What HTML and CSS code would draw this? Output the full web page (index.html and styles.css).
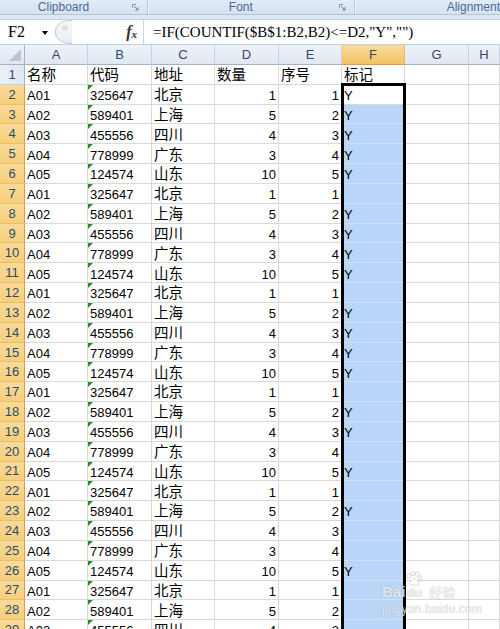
FILE: index.html
```html
<!DOCTYPE html>
<html>
<head>
<meta charset="utf-8">
<link rel="stylesheet" href="styles.css">
</head>
<body>
<div class="app">
  <div class="ribbon">
    <div class="group g1"><span class="glabel">Clipboard</span><svg class="launch" viewBox="0 0 7 7"><path d="M0.5 4V0.5H4" fill="none" stroke="#8496ac"/><path d="M2 2L6 6M6 3.2V6H3.2" fill="none" stroke="#6f849e"/></svg></div>
    <div class="group g2"><span class="glabel">Font</span><svg class="launch" viewBox="0 0 7 7"><path d="M0.5 4V0.5H4" fill="none" stroke="#8496ac"/><path d="M2 2L6 6M6 3.2V6H3.2" fill="none" stroke="#6f849e"/></svg></div>
    <div class="group g3"><span class="glabel3">Alignment</span></div>
  </div>
  <div class="band"></div>
  <div class="fbar">
    <div class="namebox"><span>F2</span><span class="arrow"></span></div>
    <svg class="split" width="18" height="24" viewBox="0 0 18 24"><defs><linearGradient id="sg" x1="0" y1="0" x2="0" y2="1"><stop offset="0" stop-color="#f6f8fb"/><stop offset="1" stop-color="#e9edf2"/></linearGradient></defs><path d="M18 0.5C6 0.5 1.5 6 1.5 12C1.5 18 6 23.5 18 23.5" fill="url(#sg)" stroke="#bfc8d3"/><circle cx="11" cy="8" r="3" fill="#dde2e8"/></svg>
    <div class="fxarea"><span class="fx"><span class="fxf">f</span><span class="fxx">x</span></span></div>
    <div class="formula">=IF(COUNTIF($B$1:B2,B2)&lt;=D2,"Y","")</div>
  </div>
  <div class="sheet">
    <div class="ch corner"><svg width="24" height="19" viewBox="0 0 24 19"><polygon points="21,4 21,16 9,16" fill="#b9c6d4"/></svg></div>
    <div class="ch">A</div><div class="ch">B</div><div class="ch">C</div><div class="ch">D</div><div class="ch">E</div><div class="ch on">F</div><div class="ch">G</div><div class="ch">H</div>

    <div class="rh">1</div><div class="c cj">名称</div><div class="c cj">代码</div><div class="c cj">地址</div><div class="c cj">数量</div><div class="c cj">序号</div><div class="c cj">标记</div><div class="c"></div><div class="c"></div>

    <div class="rh on">2</div><div class="c">A01</div><div class="c g">325647</div><div class="c cj">北京</div><div class="c n">1</div><div class="c n">1</div><div class="c act">Y</div><div class="c"></div><div class="c"></div>
    <div class="rh on">3</div><div class="c">A02</div><div class="c g">589401</div><div class="c cj">上海</div><div class="c n">5</div><div class="c n">2</div><div class="c sel">Y</div><div class="c"></div><div class="c"></div>
    <div class="rh on">4</div><div class="c">A03</div><div class="c g">455556</div><div class="c cj">四川</div><div class="c n">4</div><div class="c n">3</div><div class="c sel">Y</div><div class="c"></div><div class="c"></div>
    <div class="rh on">5</div><div class="c">A04</div><div class="c g">778999</div><div class="c cj">广东</div><div class="c n">3</div><div class="c n">4</div><div class="c sel">Y</div><div class="c"></div><div class="c"></div>
    <div class="rh on">6</div><div class="c">A05</div><div class="c g">124574</div><div class="c cj">山东</div><div class="c n">10</div><div class="c n">5</div><div class="c sel">Y</div><div class="c"></div><div class="c"></div>
    <div class="rh on">7</div><div class="c">A01</div><div class="c g">325647</div><div class="c cj">北京</div><div class="c n">1</div><div class="c n">1</div><div class="c sel"></div><div class="c"></div><div class="c"></div>
    <div class="rh on">8</div><div class="c">A02</div><div class="c g">589401</div><div class="c cj">上海</div><div class="c n">5</div><div class="c n">2</div><div class="c sel">Y</div><div class="c"></div><div class="c"></div>
    <div class="rh on">9</div><div class="c">A03</div><div class="c g">455556</div><div class="c cj">四川</div><div class="c n">4</div><div class="c n">3</div><div class="c sel">Y</div><div class="c"></div><div class="c"></div>
    <div class="rh on">10</div><div class="c">A04</div><div class="c g">778999</div><div class="c cj">广东</div><div class="c n">3</div><div class="c n">4</div><div class="c sel">Y</div><div class="c"></div><div class="c"></div>
    <div class="rh on">11</div><div class="c">A05</div><div class="c g">124574</div><div class="c cj">山东</div><div class="c n">10</div><div class="c n">5</div><div class="c sel">Y</div><div class="c"></div><div class="c"></div>
    <div class="rh on">12</div><div class="c">A01</div><div class="c g">325647</div><div class="c cj">北京</div><div class="c n">1</div><div class="c n">1</div><div class="c sel"></div><div class="c"></div><div class="c"></div>
    <div class="rh on">13</div><div class="c">A02</div><div class="c g">589401</div><div class="c cj">上海</div><div class="c n">5</div><div class="c n">2</div><div class="c sel">Y</div><div class="c"></div><div class="c"></div>
    <div class="rh on">14</div><div class="c">A03</div><div class="c g">455556</div><div class="c cj">四川</div><div class="c n">4</div><div class="c n">3</div><div class="c sel">Y</div><div class="c"></div><div class="c"></div>
    <div class="rh on">15</div><div class="c">A04</div><div class="c g">778999</div><div class="c cj">广东</div><div class="c n">3</div><div class="c n">4</div><div class="c sel">Y</div><div class="c"></div><div class="c"></div>
    <div class="rh on">16</div><div class="c">A05</div><div class="c g">124574</div><div class="c cj">山东</div><div class="c n">10</div><div class="c n">5</div><div class="c sel">Y</div><div class="c"></div><div class="c"></div>
    <div class="rh on">17</div><div class="c">A01</div><div class="c g">325647</div><div class="c cj">北京</div><div class="c n">1</div><div class="c n">1</div><div class="c sel"></div><div class="c"></div><div class="c"></div>
    <div class="rh on">18</div><div class="c">A02</div><div class="c g">589401</div><div class="c cj">上海</div><div class="c n">5</div><div class="c n">2</div><div class="c sel">Y</div><div class="c"></div><div class="c"></div>
    <div class="rh on">19</div><div class="c">A03</div><div class="c g">455556</div><div class="c cj">四川</div><div class="c n">4</div><div class="c n">3</div><div class="c sel">Y</div><div class="c"></div><div class="c"></div>
    <div class="rh on">20</div><div class="c">A04</div><div class="c g">778999</div><div class="c cj">广东</div><div class="c n">3</div><div class="c n">4</div><div class="c sel"></div><div class="c"></div><div class="c"></div>
    <div class="rh on">21</div><div class="c">A05</div><div class="c g">124574</div><div class="c cj">山东</div><div class="c n">10</div><div class="c n">5</div><div class="c sel">Y</div><div class="c"></div><div class="c"></div>
    <div class="rh on">22</div><div class="c">A01</div><div class="c g">325647</div><div class="c cj">北京</div><div class="c n">1</div><div class="c n">1</div><div class="c sel"></div><div class="c"></div><div class="c"></div>
    <div class="rh on">23</div><div class="c">A02</div><div class="c g">589401</div><div class="c cj">上海</div><div class="c n">5</div><div class="c n">2</div><div class="c sel">Y</div><div class="c"></div><div class="c"></div>
    <div class="rh on">24</div><div class="c">A03</div><div class="c g">455556</div><div class="c cj">四川</div><div class="c n">4</div><div class="c n">3</div><div class="c sel"></div><div class="c"></div><div class="c"></div>
    <div class="rh on">25</div><div class="c">A04</div><div class="c g">778999</div><div class="c cj">广东</div><div class="c n">3</div><div class="c n">4</div><div class="c sel"></div><div class="c"></div><div class="c"></div>
    <div class="rh on">26</div><div class="c">A05</div><div class="c g">124574</div><div class="c cj">山东</div><div class="c n">10</div><div class="c n">5</div><div class="c sel">Y</div><div class="c"></div><div class="c"></div>
    <div class="rh on">27</div><div class="c">A01</div><div class="c g">325647</div><div class="c cj">北京</div><div class="c n">1</div><div class="c n">1</div><div class="c sel"></div><div class="c"></div><div class="c"></div>
    <div class="rh on">28</div><div class="c">A02</div><div class="c g">589401</div><div class="c cj">上海</div><div class="c n">5</div><div class="c n">2</div><div class="c sel"></div><div class="c"></div><div class="c"></div>
    <div class="rh on">29</div><div class="c">A03</div><div class="c g">455556</div><div class="c cj">四川</div><div class="c n">4</div><div class="c n">3</div><div class="c sel"></div><div class="c"></div><div class="c"></div>

    <div class="frame"></div>
  </div>
  <div class="wm">
    <div class="wm1"><span class="wmb">Bai</span><span class="wmdu"><svg class="paw" width="18" height="15" viewBox="0 0 18 15"><ellipse cx="4" cy="5" rx="2" ry="2.5"/><ellipse cx="8" cy="2.5" rx="2" ry="2.3"/><ellipse cx="12.5" cy="3" rx="2" ry="2.3"/><ellipse cx="15.5" cy="7" rx="1.8" ry="2.2"/><path d="M5 13C5 9 8 7.5 10 7.5C12 7.5 14 10 14 12.5C14 14.5 11 14 9.5 14C7.5 14 5 14.8 5 13Z"/></svg><span class="wmb2">du</span></span><span class="wmc">经验</span></div>
    <div class="wm2">jingyan.baidu.com</div>
  </div>
</div>
</body>
</html>
```

FILE: styles.css
```css
html, body {
  margin: 0;
  padding: 0;
  overflow: hidden;
  background: #fff;
}

.app {
  width: 500px;
  height: 629px;
  overflow: hidden;
  position: relative;
  display: flex;
  flex-direction: column;
  font-family: "Liberation Sans", "Noto Sans CJK SC", sans-serif;
}

/* ribbon group labels */
.ribbon {
  flex: none;
  height: 15px;
  display: flex;
  box-sizing: border-box;
  background: linear-gradient(#e2ebf6, #d6e2f1);
  border-bottom: 1px solid #b3c5da;
}

.group {
  display: flex;
  align-items: center;
  box-sizing: border-box;
  border-right: 1px solid #b6c8dd;
  box-shadow: 1px 0 0 #eef3fa;
}

.g1 { width: 149px; }
.g2 { width: 208px; }
.g3 { flex: 1; border-right: none; box-shadow: none; padding-left: 92px; }

.glabel {
  flex: 1;
  text-align: center;
  padding-right: 5px;
  font-size: 12px;
  line-height: 14px;
  color: #4d6a91;
}

.glabel3 {
  font-size: 12px;
  line-height: 14px;
  color: #4d6a91;
  white-space: nowrap;
}

.launch {
  width: 7px;
  height: 7px;
  margin-right: 8px;
  flex: none;
}

.band {
  flex: none;
  height: 4px;
  background: #dde7f3;
}

/* formula bar */
.fbar {
  flex: none;
  height: 26px;
  display: flex;
  box-sizing: border-box;
  background: #fff;
  border-top: 1px solid #c0cfe1;
  border-bottom: 1px solid #c0cfe1;
}

.namebox {
  width: 54px;
  flex: none;
  box-sizing: border-box;
  padding-left: 8px;
  padding-right: 6px;
  display: flex;
  align-items: center;
  justify-content: space-between;
  font-family: "Liberation Serif", serif;
  font-size: 16px;
  color: #000;
}

.arrow {
  width: 0;
  height: 0;
  border-left: 3.5px solid transparent;
  border-right: 3.5px solid transparent;
  border-top: 4px solid #000;
  margin-top: 1px;
}

.split {
  flex: none;
  display: block;
}

.fxarea {
  width: 71px;
  flex: none;
  display: flex;
  align-items: center;
  justify-content: flex-end;
  padding-right: 6px;
  box-sizing: border-box;
}

.fx {
  font-family: "Liberation Serif", serif;
  font-style: italic;
  font-weight: bold;
  color: #333;
  display: flex;
  align-items: baseline;
}

.fxf { font-size: 16px; }
.fxx { font-size: 11px; margin-left: 0; position: relative; top: 1px; }

.formula {
  flex: 1;
  border-left: 1px solid #c9d5e3;
  padding-left: 9px;
  display: flex;
  align-items: center;
  font-family: "Liberation Serif", serif;
  font-size: 15px;
  color: #000;
  white-space: nowrap;
}

/* sheet grid */
.sheet {
  flex: none;
  position: relative;
  display: grid;
  grid-template-columns: 25px 63px 64px 63px 64px 63px 63px 64px 1fr;
  grid-template-rows: 20px;
  grid-auto-rows: 19.83px;
}

.ch {
  box-sizing: border-box;
  display: flex;
  align-items: center;
  justify-content: center;
  background: linear-gradient(#eef3f9, #dfe7f2);
  border-right: 1px solid #c6d2e0;
  border-bottom: 1px solid #9fb3ca;
  font-size: 13px;
  color: #2f4a6b;
}

.ch.on {
  background: linear-gradient(#f9dc9f, #f2c362);
  border-right-color: #f0b956;
  border-bottom-color: #f29436;
}

.ch.corner {
  border-right-color: #9fb3ca;
  padding: 0;
}

.corner svg { display: block; }

.rh {
  box-sizing: border-box;
  display: flex;
  align-items: center;
  justify-content: center;
  background: linear-gradient(90deg, #eaf0f8, #dfe7f2);
  border-right: 1px solid #9fb3ca;
  border-bottom: 1px solid #c6d2e0;
  font-size: 13px;
  color: #2f4a6b;
}

.rh.on {
  background: linear-gradient(#f9da98, #f6cf7c);
  border-right-color: #f29436;
  border-bottom-color: #eabd66;
}

.c {
  box-sizing: border-box;
  position: relative;
  display: flex;
  align-items: flex-end;
  padding: 0 2px;
  border-right: 1px solid #d9d9d9;
  border-bottom: 1px solid #d9d9d9;
  font-size: 13px;
  line-height: 15.6px;
  color: #000;
  white-space: nowrap;
  overflow: hidden;
}

.c.n { justify-content: flex-end; }

.c.cj {
  font-size: 14.5px;
  line-height: 16.6px;
}

.c.g::before {
  content: "";
  position: absolute;
  top: 0;
  left: 0;
  width: 0;
  height: 0;
  border-top: 5px solid #1f8f1f;
  border-right: 5px solid transparent;
}

.c.act { background: #fff; }

.c.sel {
  background: #b9d6f8;
  border-bottom-color: #cde0f7;
}

.frame {
  position: absolute;
  left: 341px;
  top: 38px;
  width: 65px;
  height: 700px;
  box-sizing: border-box;
  border: 3px solid #000;
  pointer-events: none;
}

/* watermark */
.wm {
  position: absolute;
  left: 382px;
  top: 572px;
  pointer-events: none;
  color: rgba(255, 255, 255, 0.75);
  text-shadow: 0 0 1px rgba(80, 80, 80, 0.45);
}

.wm1 {
  display: flex;
  align-items: flex-end;
  height: 27px;
}

.wmb {
  font-family: "Liberation Sans", sans-serif;
  font-weight: bold;
  font-size: 15px;
  line-height: 15px;
}

.wmdu {
  display: flex;
  flex-direction: column;
  align-items: center;
}

.paw {
  display: block;
  fill: rgba(255, 255, 255, 0.7);
  stroke: rgba(120, 120, 120, 0.35);
  stroke-width: 0.8;
}

.wmb2 {
  font-family: "Liberation Sans", sans-serif;
  font-weight: bold;
  font-size: 13px;
  line-height: 13px;
}

.wmc {
  font-family: "Noto Sans CJK SC", sans-serif;
  font-size: 13px;
  line-height: 15px;
  margin-left: 6px;
}

.wm2 {
  font-family: "Liberation Sans", sans-serif;
  font-size: 12px;
  line-height: 14px;
  margin-top: 3px;
  letter-spacing: 0.2px;
}
```
